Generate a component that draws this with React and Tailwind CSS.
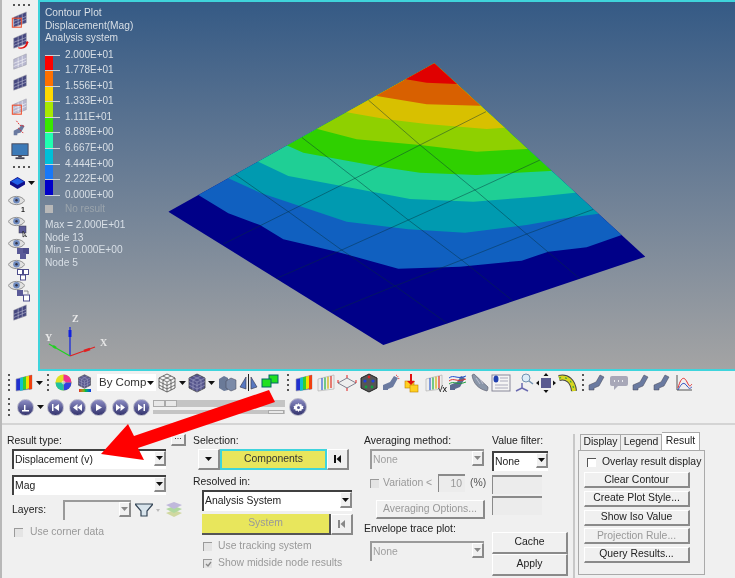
import React from "react";

// contour band boundaries, in plot coordinates (1560 x 900 drawn at 520 x 300)
const bands = [
  ["#1060c0", "115,435 205,490 300,525 370,568 530,605 715,656 900,650 1085,632 1165,605 1280,592 1385,555"],
  ["#009ab0", "205,385 300,428 410,465 560,515 745,538 915,548 1100,525 1215,505 1310,492"],
  ["#1fcf95", "295,335 385,378 545,408 750,447 940,455 1130,440 1245,428"],
  ["#2fd000", "383,287 430,308 520,325 660,350 780,368 950,375 1170,363"],
  ["#8fd000", "472,237 590,268 780,285 950,305 1100,297"],
  ["#d8c000", "560,187 680,208 800,222 980,237 1032,233"],
  ["#d86000", "650,138 800,163 960,167"],
  ["#e00000", "738,88 800,98 890,102"],
];

const meshLines = [
  "625,150 780,285 945,420 1100,552 1258,685",
  "425,262 585,385 745,510 905,630 1058,752",
  "225,373 385,485 545,600 705,708 862,820",
  "978,185 780,285 585,385 385,485 190,582",
  "1140,330 945,420 745,510 545,600 350,685",
  "1300,478 1100,552 905,630 705,708 515,785",
];

const legend = [
  ["2.000E+01", "#ff0000"],
  ["1.778E+01", "#ff7000"],
  ["1.556E+01", "#ffd800"],
  ["1.333E+01", "#a8e800"],
  ["1.111E+01", "#38e800"],
  ["8.889E+00", "#20ffb0"],
  ["6.667E+00", "#00c0d8"],
  ["4.444E+00", "#1878f8"],
  ["2.222E+00", "#0000c8"],
  ["0.000E+00", null],
];

const Dots = () => (
  <div className="flex flex-col h-[18px] w-[2px] justify-between shrink-0">
    {[0, 1, 2, 3].map((i) => (
      <div key={i} className="w-[2px] h-[2px] bg-[#555]" />
    ))}
  </div>
);

const HDots = ({ className = "" }) => (
  <div className={`flex flex-row w-[18px] justify-between ml-[3px] ${className}`}>
    {[0, 1, 2, 3].map((i) => (
      <div key={i} className="w-[2px] h-[2px] bg-[#555]" />
    ))}
  </div>
);

const Caret = () => (
  <svg width="7" height="4" viewBox="0 0 7 4" className="shrink-0">
    <path d="M0 0h7L3.500 4z" fill="#111" />
  </svg>
);

const Mesh = ({ box, arrow, ghost }) => (
  <svg width="18" height="18" viewBox="0 0 20 20" className="block">
    <path d="M3 7l14-6v12L3 18z" fill={ghost ? "#b8b8d0" : "#45477f"} stroke="#9a9aa8" strokeWidth=".6" />
    <path d="M3 11.500l14-5.500M3 15l14-6M8 5v11M12.500 3v11.500" stroke={ghost ? "#fff" : "#c8c8dc"} strokeWidth=".6" />
    {box && <rect x="1.500" y="8" width="10" height="10" fill="none" stroke="#f05030" strokeWidth="1.200" />}
    {arrow && <path d="M8 17c5 1 8-1 9-5l-1 0 2-2 2 2h-1c-1 5-5 8-11 6z" fill="#e01010" />}
  </svg>
);

const Eye = ({ children }) => (
  <div className="relative w-[22px] h-[21px]">
    <svg width="17" height="11" viewBox="0 0 15 10" className="absolute left-[-1px] top-[-1px]">
      <path d="M0 5C3 0 12 0 15 5 12 10 3 10 0 5z" fill="#e0e0e0" stroke="#777" strokeWidth=".7" />
      <circle cx="7.500" cy="4.800" r="3" fill="#6f8bbf" />
      <circle cx="7.500" cy="4.800" r="1.100" fill="#334" />
    </svg>
    <div className="absolute left-[7px] top-[8px]">{children}</div>
  </div>
);

const MiniBoxes = ({ kind }) => (
  <svg width="15" height="13" viewBox="0 0 15 13">
    {kind === "one" && (
      <>
        <rect x="3" y="1" width="7" height="7" fill="#5a5a98" stroke="#334" strokeWidth=".5" />
        <path d="M7 6v6l2-1.500 1.500 1.500z" fill="#fff" stroke="#111" strokeWidth=".7" />
      </>
    )}
    {kind === "three" && (
      <>
        <rect x="1" y="1" width="6" height="6" fill="#5a5a98" />
        <rect x="7" y="1" width="6" height="6" fill="#4c4c8c" />
        <rect x="4" y="6" width="6" height="6" fill="#5a5a98" />
      </>
    )}
    {kind === "outline" && (
      <g fill="#fff" stroke="#4c4c8c" strokeWidth="1">
        <rect x="1.500" y="1.500" width="5" height="5" />
        <rect x="7.500" y="1.500" width="5" height="5" />
        <rect x="4.500" y="7" width="5" height="5" />
      </g>
    )}
    {kind === "swap" && (
      <>
        <rect x="1" y="1" width="6" height="6" fill="#5a5a98" />
        <rect x="7.500" y="6" width="6" height="6" fill="#fff" stroke="#4c4c8c" />
        <path d="M8 2h4v3" fill="none" stroke="#777" strokeWidth=".8" />
      </>
    )}
  </svg>
);

const Cube = ({ wire, color = "#5a5a90", size = 20 }) => (
  <svg width={size} height={size} viewBox="0 0 20 20">
    <path d="M10 1l8 4v10l-8 4-8-4V5z" fill={wire ? "#f4f4f4" : color} stroke="#444" strokeWidth=".8" />
    <path
      d="M2 5l8 4 8-4M10 9v10M6 3l8 4v10M14 3L6 7v10M2 8.500l8 4 8-4M2 12l8 4 8-4"
      fill="none"
      stroke={wire ? "#444" : "#9a9ac0"}
      strokeWidth=".7"
    />
  </svg>
);

const Spectrum = ({ solid }) => (
  <svg width="20" height="20" viewBox="0 0 20 20">
    <path d="M2 6l16-4v14L2 18z" fill={solid ? "#2030d0" : "#eee"} stroke="#aaa" strokeWidth=".6" />
    {solid ? (
      <>
        <path d="M6 5l3-.8v13l-3 .6z" fill="#10c0d0" />
        <path d="M9 4.200l3-.8v12.800l-3 .6z" fill="#30d030" />
        <path d="M12 3.400l3-.7v12.700l-3 .8z" fill="#f0e000" />
        <path d="M15 2.700l3-.7v14l-3 .6z" fill="#f04010" />
      </>
    ) : (
      <>
        <path d="M6 5v12" stroke="#3060d0" strokeWidth="1.200" />
        <path d="M9 4.500v12" stroke="#20b040" strokeWidth="1.200" />
        <path d="M12 3.800v12" stroke="#d0b000" strokeWidth="1.200" />
        <path d="M15 3v12" stroke="#e03020" strokeWidth="1.200" />
      </>
    )}
  </svg>
);

const Bend = () => (
  <svg width="20" height="20" viewBox="0 0 20 20">
    <path d="M2 17v-5l7-3 4-7 4 2-5 9-5 2v2z" fill="#6a7aa0" stroke="#445" strokeWidth=".5" />
  </svg>
);

const toolbarIcons = [
  <Spectrum solid key="a" />,
  <Spectrum key="b" />,
  <svg key="c" width="20" height="20" viewBox="0 0 20 20">
    <path d="M1 10l9-5 9 5-9 5z" fill="#eee" stroke="#667" strokeWidth=".8" />
    <path d="M1 7v3M10 2v3M19 7v3M10 15v3" stroke="#e02020" strokeWidth="1" />
  </svg>,
  <svg key="d" width="20" height="20" viewBox="0 0 20 20">
    <path d="M10 1l8 4v10l-8 4-8-4V5z" fill="#555" stroke="#222" />
    <circle cx="6" cy="8" r="1.600" fill="#2040e0" />
    <circle cx="14" cy="8" r="1.600" fill="#2040e0" />
    <circle cx="10" cy="4" r="1.400" fill="#e02020" />
    <circle cx="7" cy="14" r="1.400" fill="#10a040" />
    <circle cx="13" cy="14" r="1.400" fill="#10a040" />
  </svg>,
  <svg key="e" width="20" height="20" viewBox="0 0 20 20">
    <path d="M2 17v-5l7-3 4-6 4 2-5 9-5 2v1z" fill="#6a7aa0" />
    <path d="M15 2c2 1 3 3 3 5" stroke="#e02020" fill="none" strokeDasharray="1 1" />
  </svg>,
  <svg key="f" width="20" height="20" viewBox="0 0 20 20">
    <rect x="3" y="8" width="9" height="7" fill="#ffd020" stroke="#c08000" strokeWidth=".6" />
    <rect x="8" y="12" width="8" height="7" fill="#ffd020" stroke="#c08000" strokeWidth=".6" />
    <path d="M8 1h2v7h3l-4 4-4-4h3z" fill="#e01010" />
  </svg>,
  <div key="g" className="relative w-[20px] h-[20px]">
    <Spectrum />
    <span className="absolute right-[-3px] bottom-[-1px] text-[9px] leading-none text-black">√x</span>
  </div>,
  <svg key="h" width="20" height="20" viewBox="0 0 20 20" className="ml-[2px]">
    <path d="M2 17v-5l7-3 4-6 4 2-5 9-5 2v1z" fill="#5a6a90" />
    <path d="M1 8c5-4 8 2 17-2" stroke="#e03030" fill="none" />
    <path d="M1 11c5-4 8 2 17-2" stroke="#20a040" fill="none" />
    <path d="M1 5c5-4 8 2 17-2" stroke="#2050d0" fill="none" />
  </svg>,
  <svg key="i" width="20" height="20" viewBox="0 0 20 20">
    <path d="M2 2c1 8 6 14 15 16 1-1 1-3 1-4L4 1z" fill="#8a96a8" stroke="#556" strokeWidth=".6" />
    <path d="M6 5l4 6M9 4l4 7" stroke="#dde" strokeWidth=".6" />
  </svg>,
  <svg key="j" width="20" height="20" viewBox="0 0 20 20">
    <rect x="1" y="2" width="18" height="16" fill="#f4f4f4" stroke="#889" />
    <ellipse cx="5" cy="6" rx="2.500" ry="3.500" fill="#2040b0" />
    <path d="M9 5h8M9 8h8M4 12h13M4 15h13" stroke="#aab" />
  </svg>,
  <svg key="k" width="20" height="20" viewBox="0 0 20 20" className="ml-[1px]">
    <path d="M8 10v5l-6 3M8 15l6 3" stroke="#6a6ab0" strokeWidth="1.500" fill="none" />
    <circle cx="12" cy="5" r="4" fill="#dcecf8" stroke="#7090b0" />
    <path d="M15 8l4 3" stroke="#7090b0" strokeWidth="1.500" />
  </svg>,
  <svg key="l" width="20" height="20" viewBox="0 0 20 20">
    <rect x="5" y="5" width="10" height="10" fill="#5a5a90" />
    <path d="M10 0l2.500 3h-5zM10 20l2.500-3h-5zM0 10l3-2.500v5zM20 10l-3-2.500v5z" fill="#111" />
  </svg>,
  <svg key="m" width="20" height="20" viewBox="0 0 20 20">
    <path d="M2 5c8-2 14 3 15 13" fill="none" stroke="#444" strokeWidth="6" />
    <path d="M2 5c8-2 14 3 15 13" fill="none" stroke="#d8d820" strokeWidth="4" />
    <path d="M2 5c8-2 14 3 15 13" fill="none" stroke="#40a040" strokeWidth="1.200" strokeDasharray="2 4" />
  </svg>,
];

const endIcons = [
  <Bend key="a" />,
  <svg key="b" width="20" height="20" viewBox="0 0 20 20">
    <path d="M3 3h14a2 2 0 012 2v6a2 2 0 01-2 2H9l-4 4v-4H3a2 2 0 01-2-2V5a2 2 0 012-2z" fill="#a8a8b8" />
    <path d="M5 8h1M9 8h1M13 8h1" stroke="#fff" strokeWidth="1.500" />
  </svg>,
  <Bend key="c" />,
  <Bend key="d" />,
  <svg key="e" width="20" height="20" viewBox="0 0 20 20">
    <path d="M3 2v15h15" stroke="#555" fill="none" />
    <path d="M4 15C7 4 10 3 13 9s3 4 5 2" stroke="#e03030" fill="none" />
    <path d="M4 17C8 9 10 9 13 13s3 2 5 1" stroke="#3050c0" fill="none" />
  </svg>,
];

const Round = ({ children, size = 17 }) => (
  <div
    className="rounded-full bg-gradient-to-b from-[#8c8cc4] to-[#35356f] flex items-center justify-center shrink-0 border border-[#b8b8c8]"
    style={{ width: size, height: size }}
  >
    <svg width="11" height="11" viewBox="0 0 11 11" fill="#fff">
      {children}
    </svg>
  </div>
);

const Raised = ({ className = "", children }) => (
  <div
    className={`flex items-center justify-center bg-[#f0f0f0] border-t border-l border-t-white border-l-white border-b-2 border-r-2 border-b-[#8a8a8a] border-r-[#8a8a8a] ${className}`}
  >
    {children}
  </div>
);

const Select = ({ value, disabled, className = "" }) => (
  <div
    className={`flex items-stretch border-t-2 border-l-2 ${disabled ? "border-t-[#9a9a9a] border-l-[#9a9a9a] bg-[#f0f0f0] text-[#a0a0a0]" : "border-t-[#404040] border-l-[#404040] bg-white text-[#222]"} ${className}`}
  >
    <div className="flex-1 flex items-center pl-[1px] overflow-hidden whitespace-nowrap">{value}</div>
    <Raised className="w-[12px] mb-[3px]">
      <svg width="7" height="4" viewBox="0 0 7 4">
        <path d="M0 0h7L3.500 4z" fill={disabled ? "#888" : "#111"} />
      </svg>
    </Raised>
  </div>
);

const Check = ({ checked, disabled }) => (
  <div
    className={`w-[9px] h-[9px] shrink-0 border-t border-l flex items-center justify-center ${disabled ? "bg-[#e4e4e4] border-[#9a9a9a]" : "bg-white border-[#555]"}`}
  >
    {checked && (
      <svg width="7" height="7" viewBox="0 0 7 7">
        <path d="M1 3l2 2 3-4" fill="none" stroke="#888" strokeWidth="1.300" />
      </svg>
    )}
  </div>
);

const SkipEnd = ({ color = "#111" }) => (
  <svg width="7" height="8" viewBox="0 0 7 8">
    <path d="M0 0h2v8H0zM7 0v8L2.500 4z" fill={color} />
  </svg>
);

const Sunken = ({ className = "", children }) => (
  <div className={`border-t-2 border-l border-t-[#8a8a8a] border-l-[#8a8a8a] bg-[#ececec] ${className}`}>{children}</div>
);

const App = () => {
  return (
    <div className="relative w-[735px] h-[578px] overflow-hidden bg-[#f0f0f0] border-l-2 border-l-[#b8b8b8] text-[10.400px] leading-none text-[#222] font-['Liberation_Sans',Arial,sans-serif] blur-[0.3px]">
      {/* top: side toolbar and graphics area */}
      <div className="flex h-[371px]">
        <div className="w-[36px] shrink-0 flex flex-col items-center pt-[4px]">
          <HDots className="mb-[5px]" />
          <div className="flex flex-col items-center gap-[3px]">
            <Mesh box />
            <Mesh arrow />
            <Mesh ghost />
            <Mesh />
            <div className="mt-[3px]">
              <Mesh box ghost />
            </div>
            <svg width="18" height="18" viewBox="0 0 20 20">
              <path d="M3 18v-5l6-3 3-4 3 2-4 7-4 1v2z" fill="#6a7aa0" />
              <path d="M6 2l4 5 5 1M8 10l6 6" stroke="#e02020" strokeDasharray="2 1" fill="none" />
            </svg>
            <svg width="18" height="18" viewBox="0 0 20 20" className="mt-[2px]">
              <rect x="1" y="2" width="18" height="13" fill="#3c7ab8" stroke="#445" />
              <rect x="8" y="15" width="4" height="2" fill="#445" />
              <rect x="5" y="17" width="10" height="2" fill="#445" />
            </svg>
          </div>
          <HDots className="mt-[6px] mb-[9px]" />
          <div className="flex items-center gap-[3px] ml-[5px] mb-[7px]">
            <svg width="15" height="12" viewBox="0 0 15 12">
              <path d="M7.500 0L15 4.500v3L7.500 12 0 7.500v-3z" fill="#10108c" />
              <path d="M7.500 1L14 4.500 7.500 8 1 4.500z" fill="#2060e8" />
            </svg>
            <Caret />
          </div>
          <div className="flex flex-col items-center gap-[0.300px]">
            <Eye>
              <span className="pl-[5px] text-[7px] font-bold">1</span>
            </Eye>
            <Eye>
              <MiniBoxes kind="one" />
            </Eye>
            <Eye>
              <MiniBoxes kind="three" />
            </Eye>
            <Eye>
              <MiniBoxes kind="outline" />
            </Eye>
            <Eye>
              <MiniBoxes kind="swap" />
            </Eye>
            <div className="mt-[2px]">
              <Mesh />
            </div>
          </div>
        </div>

        <div className="relative flex-1 border-2 border-r-0 border-[#3fd4dc] bg-gradient-to-b from-[#355a85] to-[#a4a4a4] overflow-hidden">
          <svg width="697" height="368" viewBox="0 0 697 368" className="absolute left-0 top-0">
            <defs>
              <clipPath id="plate">
                <polygon points="823,40 1456,620 670,885 25,485" />
              </clipPath>
            </defs>
            <g transform="translate(120 48) scale(0.33333)">
              <g clipPath="url(#plate)">
                <rect x="0" y="0" width="1560" height="900" fill="#000088" />
                {bands.map(([color, pts]) => (
                  <polygon key={color} points={`0,-200 ${pts.split(" ")[0].replace(/^\d+/, "0")} ${pts} 1560,${pts.split(" ").pop().split(",")[1]} 1560,-200`} fill={color} />
                ))}
                {meshLines.map((pts) => (
                  <polyline key={pts} points={pts} fill="none" stroke="#06303a" strokeOpacity="0.45" strokeWidth="3" />
                ))}
              </g>
            </g>
            {/* triad */}
            <g fill="none" strokeWidth="1.200">
              <path d="M30 354V325" stroke="#1020e0" />
              <path d="M30 335v-7" stroke="#1020e0" strokeWidth="3" />
              <path d="M30 354l-21-12" stroke="#20d020" />
              <path d="M16 346l-3-2" stroke="#20d020" strokeWidth="2.500" />
              <path d="M30 354l25-9" stroke="#e02020" />
              <path d="M44 349l6-2" stroke="#e02020" strokeWidth="2.500" />
            </g>
          </svg>

          <div className="absolute left-[32px] top-[312px] text-[10px] text-[#e8e8e8] font-['Liberation_Serif',serif] font-bold">Z</div>
          <div className="absolute left-[5px] top-[331px] text-[10px] text-[#e8e8e8] font-['Liberation_Serif',serif] font-bold">Y</div>
          <div className="absolute left-[60px] top-[336px] text-[10px] text-[#e8e8e8] font-['Liberation_Serif',serif] font-bold">X</div>

          <div className="absolute left-[5px] top-[5px] flex flex-col text-[#d8dfe6]">
            <div className="text-[10.200px] leading-[12.500px] whitespace-nowrap">
              <div>Contour Plot</div>
              <div>Displacement(Mag)</div>
              <div>Analysis system</div>
            </div>
            <div className="flex flex-col mt-[10px] text-[10px]">
              {legend.map(([label, color]) => (
                <div key={label} className="relative h-[15.600px] flex items-start">
                  <div className="w-[8px] h-full" style={{ backgroundColor: color || "transparent" }} />
                  <div className="absolute left-0 top-0 w-[15px] h-[1px] bg-[#d0d4d8]" />
                  <div className="absolute left-[20px] top-[-5px] whitespace-nowrap">{label}</div>
                </div>
              ))}
            </div>
            <div className="flex items-center gap-[12px] mt-[-6px] text-[#9aa4ac] text-[10px]">
              <div className="w-[8px] h-[8px] bg-[#b8b8b8]" />
              <div>No result</div>
            </div>
            <div className="mt-[5px] text-[10.200px] leading-[12.500px] whitespace-nowrap">
              <div>Max = 2.000E+01</div>
              <div>Node 13</div>
              <div>Min = 0.000E+00</div>
              <div>Node 5</div>
            </div>
          </div>
        </div>
      </div>

      {/* toolbars */}
      <div className="h-[54px] pl-[6px] flex flex-col border-b-2 border-b-[#d4d4d4]">
        <div className="h-[23px] flex items-center">
          <Dots />
          <div className="ml-[4px]">
            <Spectrum solid />
          </div>
          <div className="ml-[2px]">
            <Caret />
          </div>
          <div className="ml-[4px]">
            <Dots />
          </div>
          <svg width="17" height="17" viewBox="0 0 17 17" className="ml-[6px]">
            <circle cx="8.500" cy="8.500" r="8" fill="#e0e020" />
            <path d="M8.500 8.500V.5a8 8 0 018 8z" fill="#f03090" />
            <path d="M8.500 8.500h8a8 8 0 01-8 8z" fill="#3040e0" />
            <path d="M8.500 8.500v8a8 8 0 01-8-8z" fill="#20c0a0" />
            <circle cx="8.500" cy="8.500" r="2" fill="#fff" fillOpacity=".5" />
          </svg>
          <div className="ml-[5px] flex flex-col items-center">
            <Cube size={15} />
            <div className="w-[12px] h-[3px] bg-gradient-to-r from-[#e02020] via-[#20c020] to-[#2020e0]" />
          </div>
          <div className="ml-[5px] w-[59px] h-[17px] bg-white flex items-center justify-between px-[2px] text-[11.500px] text-[#333] whitespace-nowrap">
            <span>By Comp</span>
            <Caret />
          </div>
          <div className="ml-[1px]">
            <Cube wire />
          </div>
          <div className="ml-[2px]">
            <Caret />
          </div>
          <div className="ml-[1px]">
            <Cube color="#55558c" />
          </div>
          <div className="ml-[1px]">
            <Caret />
          </div>
          <svg width="19" height="19" viewBox="0 0 19 19" className="ml-[3px]">
            <path d="M1 6l5-3 4 2v12l-4 1-5-3z" fill="#6a7a98" />
            <path d="M8 8l5-3 5 2v9l-5 2-5-3z" fill="#7a8aa8" stroke="#445" strokeWidth=".5" />
          </svg>
          <svg width="19" height="19" viewBox="0 0 19 19" className="ml-[2px]">
            <path d="M7 4v12L1 14zM12 4v12l6-2z" fill="#5878c0" stroke="#334" strokeWidth=".6" />
            <path d="M9.500 1v17" stroke="#222" />
          </svg>
          <svg width="19" height="17" viewBox="0 0 19 17" className="ml-[3px]">
            <rect x="8" y="1" width="9" height="8" fill="#20e020" stroke="#066" />
            <rect x="1" y="5" width="9" height="8" fill="#20e020" stroke="#066" />
          </svg>
          <div className="ml-[7px]">
            <Dots />
          </div>
          <div className="ml-[5px] flex gap-[1.700px]">{toolbarIcons}</div>
          <div className="ml-[5px]">
            <Dots />
          </div>
          <div className="ml-[3px] flex gap-[1.700px]">{endIcons}</div>
        </div>
        <div className="h-[26px] flex items-center">
          <Dots />
          <div className="ml-[7px]">
            <Round>
              <path d="M2 8h7v1.500H2zM4 3h1.500v5H4z" />
            </Round>
          </div>
          <div className="ml-[3px]">
            <Caret />
          </div>
          <div className="ml-[3px] flex gap-[4.500px]">
            <Round>
              <path d="M2 2h1.500v7H2zM9 2v7L4 5.500z" />
            </Round>
            <Round>
              <path d="M5.500 2v7L1 5.500zM10 2v7L5.500 5.500z" />
            </Round>
            <Round>
              <path d="M3 2v7l6-3.500z" />
            </Round>
            <Round>
              <path d="M1 2v7l4.500-3.500zM5.500 2v7l4.500-3.500z" />
            </Round>
            <Round>
              <path d="M2 2v7l5-3.500zM7.500 2H9v7H7.500z" />
            </Round>
          </div>
          <div className="ml-[3px] w-[132px] flex flex-col gap-[3px]">
            <div className="h-[7px] bg-[#c4c4c4] flex">
              <div className="w-[12px] h-full bg-[#e8e8e8] border border-[#aaa]" />
              <div className="w-[12px] h-full bg-[#e8e8e8] border border-[#aaa]" />
            </div>
            <div className="h-[4px] bg-[#c4c4c4] flex justify-end">
              <div className="w-[16px] h-full bg-[#e8e8e8] border border-[#aaa] mr-[1px]" />
            </div>
          </div>
          <div className="ml-[4px]">
            <Round size={18}>
              <path d="M5.500 1l1 1.500 1.800-.6.4 1.800 1.800.4-.6 1.400.6 1.400-1.800.4-.4 1.800-1.800-.6-1 1.500-1-1.500-1.800.6-.4-1.800L.500 7.300l.6-1.800-.6-1.400 1.800-.4.4-1.800 1.800.6zM5.500 4a1.500 1.500 0 100 3 1.500 1.500 0 000-3z" fillRule="evenodd" />
            </Round>
          </div>
        </div>
      </div>

      {/* form panel */}
      <div className="flex h-[153px] pt-[9px]">
        <div className="w-[188px] shrink-0 pl-[5px] pr-[4px]">
          <div className="flex justify-between items-start h-[15px]">
            <span className="pt-[2px]">Result type:</span>
            <Raised className="w-[15px] h-[12px] items-end pb-[3px] text-[9px]">...</Raised>
          </div>
          <Select value="Displacement (v)" className="ml-[5px] w-[154px] h-[20px]" />
          <Select value="Mag" className="ml-[5px] mt-[6px] w-[154px] h-[20px]" />
          <div className="flex items-center ml-[5px] mt-[5px]">
            <span className="w-[51px]">Layers:</span>
            <Select disabled value="" className="w-[68px] h-[20px]" />
            <svg width="18" height="14" viewBox="0 0 18 14" className="ml-[4px]">
              <path d="M0 1h18l-6 7v5H6V8z" fill="#d8e4ec" stroke="#345" strokeWidth="1.200" />
            </svg>
            <svg width="4" height="3" viewBox="0 0 4 3" className="ml-[3px]">
              <path d="M0 0h4L2 3z" fill="#bbb" />
            </svg>
            <svg width="18" height="16" viewBox="0 0 18 16" className="ml-[5px]">
              <path d="M9 8l8 3-8 4-8-4z" fill="#d0d8a0" />
              <path d="M9 4l8 3-8 4-8-4z" fill="#b0d8a0" />
              <path d="M9 0l8 3-8 4-8-4z" fill="#c0b8dc" />
            </svg>
          </div>
          <div className="flex items-center gap-[7px] ml-[7px] mt-[7px] text-[#999]">
            <Check disabled />
            <span>Use corner data</span>
          </div>
        </div>

        <div className="w-[172px] shrink-0 pl-[3px]">
          <div className="h-[15px] pt-[2px]">Selection:</div>
          <div className="flex ml-[5px] h-[21px]">
            <Raised className="w-[22px]">
              <Caret />
            </Raised>
            <div className="w-[107px] flex items-center justify-center bg-[#e8e65c] border-2 border-[#3fd4dc] text-[#333]">Components</div>
            <Raised className="w-[22px]">
              <SkipEnd />
            </Raised>
          </div>
          <div className="mt-[7px] h-[12px]">Resolved in:</div>
          <Select value="Analysis System" className="ml-[9px] mt-[1px] w-[150px] h-[21px]" />
          <div className="flex ml-[9px] mt-[3px] h-[21px]">
            <div className="w-[129px] flex items-center justify-center bg-[#e8e65c] border-r-2 border-b-2 border-[#555] text-[#999]">System</div>
            <Raised className="w-[22px]">
              <SkipEnd color="#888" />
            </Raised>
          </div>
          <div className="flex items-center gap-[6px] ml-[10px] mt-[6px] text-[#999]">
            <Check disabled />
            <span>Use tracking system</span>
          </div>
          <div className="flex items-center gap-[6px] ml-[10px] mt-[7px] text-[#999]">
            <Check disabled checked />
            <span>Show midside node results</span>
          </div>
        </div>

        <div className="w-[128px] shrink-0 pl-[2px]">
          <div className="h-[15px] pt-[2px]">Averaging method:</div>
          <Select disabled value="None" className="ml-[6px] w-[114px] h-[20px]" />
          <div className="flex items-center ml-[6px] mt-[5px] text-[#999]">
            <Check disabled />
            <span className="ml-[4px] w-[55px] whitespace-nowrap">Variation &lt;</span>
            <Sunken className="w-[27px] h-[18px] flex items-center justify-end pr-[3px]">10</Sunken>
            <span className="ml-[5px] text-[#555]">(%)</span>
          </div>
          <Raised className="ml-[12px] mt-[8px] w-[109px] h-[19px] text-[#999]">Averaging Options...</Raised>
          <div className="mt-[5px] h-[13px]">Envelope trace plot:</div>
          <Select disabled value="None" className="ml-[6px] mt-[4px] w-[114px] h-[20px]" />
        </div>

        <div className="w-[85px] shrink-0 pl-[2px] border-r-2 border-r-[#c8c8c8]">
          <div className="h-[17px] pt-[2px]">Value filter:</div>
          <Select value="None" className="w-[56px] h-[20px]" />
          <Sunken className="w-[50px] h-[19px] mt-[4px]" />
          <Sunken className="w-[50px] h-[19px] mt-[2px]" />
          <Raised className="w-[76px] h-[22px] mt-[17px]">Cache</Raised>
          <Raised className="w-[76px] h-[22px]">Apply</Raised>
        </div>

        <div className="ml-[3px] mt-[-2px] w-[127px] shrink-0">
          <div className="flex pl-[2px] h-[18px] items-end">
            <div className="w-[41px] h-[16px] flex items-center justify-center border-t border-l border-r border-[#aaa] bg-[#f0f0f0]">Display</div>
            <div className="w-[41px] h-[16px] flex items-center justify-center border-t border-r border-[#aaa] bg-[#f0f0f0]">Legend</div>
            <div className="w-[38px] h-[18px] flex items-center justify-center border-t border-r border-[#aaa] bg-white">Result</div>
          </div>
          <div className="h-[125px] border border-[#aaa] pl-[5px] pt-[6px]">
            <div className="flex items-center gap-[6px] pl-[3px] whitespace-nowrap">
              <Check />
              <span>Overlay result display</span>
            </div>
            <div className="flex flex-col gap-[2.700px] mt-[5px] w-[106px]">
              <Raised className="h-[16px]">Clear Contour</Raised>
              <Raised className="h-[16px]">Create Plot Style...</Raised>
              <Raised className="h-[16px]">Show Iso Value</Raised>
              <Raised className="h-[16px] text-[#999]">Projection Rule...</Raised>
              <Raised className="h-[16px]">Query Results...</Raised>
            </div>
          </div>
        </div>
      </div>

      {/* red annotation arrow, laid over the panel */}
      <svg width="735" height="578" viewBox="0 0 735 578" className="absolute left-[-2px] top-0 pointer-events-none">
        <polygon points="101,454 128,424 134,436 269,390 275,402 138,448 144,460" fill="#ff0000" />
      </svg>
    </div>
  );
};

export default App;
